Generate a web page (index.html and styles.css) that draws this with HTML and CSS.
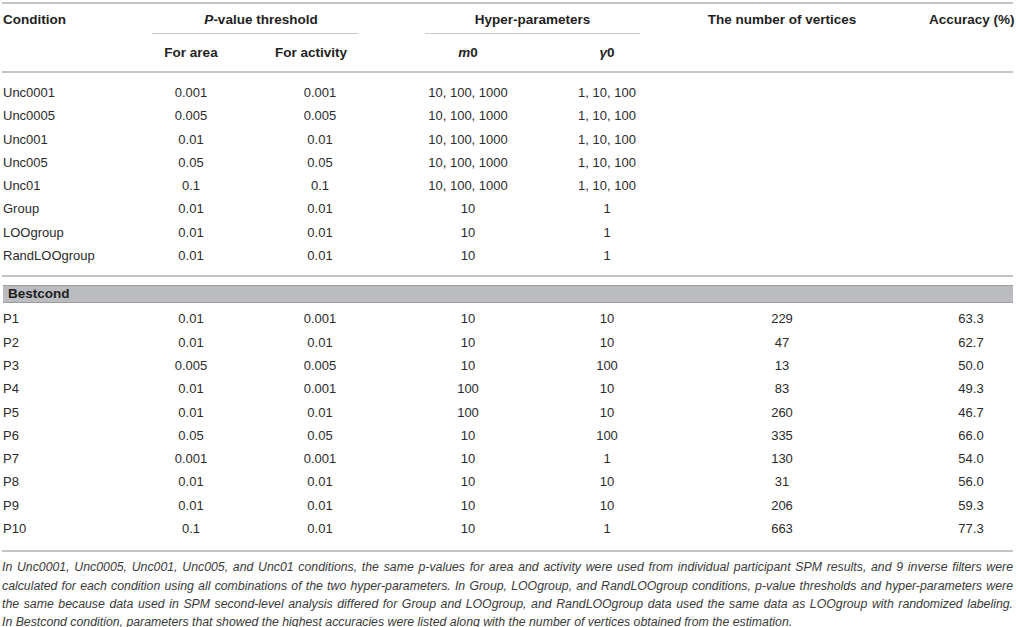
FILE: index.html
```html
<!DOCTYPE html>
<html lang="en">

<head>
    <meta charset="UTF-8">
    <meta name="viewport" content="width=device-width, initial-scale=1.0">
    <title>Table</title>
    <link rel="stylesheet" href="styles.css">
</head>

<body>
    <div class="wrap">
        <table class="tbl">
            <colgroup>
                <col class="c1">
                <col class="c2">
                <col class="c3">
                <col class="c4">
                <col class="c5">
                <col class="c6">
                <col class="c7">
            </colgroup>
            <thead>
                <tr class="h1">
                    <th rowspan="2" class="left top">Condition</th>
                    <th colspan="2"><div class="grp grp-p"><span><i>P</i>-value threshold</span></div></th>
                    <th colspan="2"><div class="grp grp-h">Hyper-parameters</div></th>
                    <th rowspan="2" class="top verts">The number of vertices</th>
                    <th rowspan="2" class="top">Accuracy (%)</th>
                </tr>
                <tr class="h2">
                    <th>For area</th>
                    <th class="act">For activity</th>
                    <th><i>m</i>0</th>
                    <th><i>γ</i>0</th>
                </tr>
            </thead>
            <tbody class="body">
                <tr><td>Unc0001</td><td>0.001</td><td>0.001</td><td>10, 100, 1000</td><td>1, 10, 100</td><td></td><td></td></tr>
                <tr><td>Unc0005</td><td>0.005</td><td>0.005</td><td>10, 100, 1000</td><td>1, 10, 100</td><td></td><td></td></tr>
                <tr><td>Unc001</td><td>0.01</td><td>0.01</td><td>10, 100, 1000</td><td>1, 10, 100</td><td></td><td></td></tr>
                <tr><td>Unc005</td><td>0.05</td><td>0.05</td><td>10, 100, 1000</td><td>1, 10, 100</td><td></td><td></td></tr>
                <tr><td>Unc01</td><td>0.1</td><td>0.1</td><td>10, 100, 1000</td><td>1, 10, 100</td><td></td><td></td></tr>
                <tr><td>Group</td><td>0.01</td><td>0.01</td><td>10</td><td>1</td><td></td><td></td></tr>
                <tr><td>LOOgroup</td><td>0.01</td><td>0.01</td><td>10</td><td>1</td><td></td><td></td></tr>
                <tr><td>RandLOOgroup</td><td>0.01</td><td>0.01</td><td>10</td><td>1</td><td></td><td></td></tr>
            </tbody>
            <tbody class="body best">
                <tr class="band-row"><td colspan="7"><div class="band">Bestcond</div></td></tr>
                <tr><td>P1</td><td>0.01</td><td>0.001</td><td>10</td><td>10</td><td>229</td><td>63.3</td></tr>
                <tr><td>P2</td><td>0.01</td><td>0.01</td><td>10</td><td>10</td><td>47</td><td>62.7</td></tr>
                <tr><td>P3</td><td>0.005</td><td>0.005</td><td>10</td><td>100</td><td>13</td><td>50.0</td></tr>
                <tr><td>P4</td><td>0.01</td><td>0.001</td><td>100</td><td>10</td><td>83</td><td>49.3</td></tr>
                <tr><td>P5</td><td>0.01</td><td>0.01</td><td>100</td><td>10</td><td>260</td><td>46.7</td></tr>
                <tr><td>P6</td><td>0.05</td><td>0.05</td><td>10</td><td>100</td><td>335</td><td>66.0</td></tr>
                <tr><td>P7</td><td>0.001</td><td>0.001</td><td>10</td><td>1</td><td>130</td><td>54.0</td></tr>
                <tr><td>P8</td><td>0.01</td><td>0.01</td><td>10</td><td>10</td><td>31</td><td>56.0</td></tr>
                <tr><td>P9</td><td>0.01</td><td>0.01</td><td>10</td><td>10</td><td>206</td><td>59.3</td></tr>
                <tr><td>P10</td><td>0.1</td><td>0.01</td><td>10</td><td>1</td><td>663</td><td>77.3</td></tr>
            </tbody>
        </table>

        <div class="note">
            <span class="full">In Unc0001, Unc0005, Unc001, Unc005, and Unc01 conditions, the same p-values for area and activity were used from individual participant SPM results, and 9 inverse filters were</span>
            <span class="full">calculated for each condition using all combinations of the two hyper-parameters. In Group, LOOgroup, and RandLOOgroup conditions, p-value thresholds and hyper-parameters were</span>
            <span class="full">the same because data used in SPM second-level analysis differed for Group and LOOgroup, and RandLOOgroup data used the same data as LOOgroup with randomized labeling.</span>
            <span>In Bestcond condition, parameters that showed the highest accuracies were listed along with the number of vertices obtained from the estimation.</span>
        </div>
    </div>
</body>

</html>
```

FILE: styles.css
```css
* {
    box-sizing: border-box;
}
body {
    margin: 0;
    background: #fff;
    color: #2b2b2b;
    font-family: "Liberation Sans", Arial, sans-serif;
}
.wrap {
    padding: 2px 3px 0 2px;
}
.tbl {
    width: 100%;
    border-collapse: collapse;
    table-layout: fixed;
    font-size: 13px;
    border-top: 2px solid #c4c4c4;
}
.c1 { width: 129px; }
.c2 { width: 120px; }
.c3 { width: 138px; }
.c4 { width: 158px; }
.c5 { width: 120px; }
.c6 { width: 262px; }
.c7 { width: 84px; }

th,
td {
    padding: 0;
    text-align: center;
    white-space: nowrap;
}
th {
    font-weight: bold;
    font-size: 13.5px;
    line-height: 16px;
    color: #1f1f1f;
}
th.left,
td:first-child {
    text-align: left;
    padding-left: 1px;
}
th.top {
    vertical-align: top;
    padding-top: 8px;
}
th.verts,
td:nth-child(6) {
    padding-right: 32px;
}
th.act {
    padding-right: 18px;
}
.h1 > th {
    padding-top: 8px;
}
.grp {
    padding-bottom: 5px;
    border-bottom: 1px solid #cbcbcb;
}
.grp-p {
    margin: 0 31px 0 21px;
}
.grp-p span {
    padding-left: 12px;
}
.grp-h {
    margin: 0 27px 0 36px;
}
.h2 > th {
    padding-top: 11px;
    padding-bottom: 10px;
}
thead {
    border-bottom: 2px solid #c4c4c4;
}

.body td {
    height: 23.3px;
    line-height: 23.3px;
}
.body tr:first-child td {
    padding-top: 8px;
}
.body tr:last-child td {
    padding-bottom: 8px;
}
tbody.body {
    border-bottom: 2px solid #c4c4c4;
}
.best tr:nth-child(2) td {
    padding-top: 4px;
}
.best tr:last-child td {
    padding-bottom: 10px;
}
.best .band-row td {
    padding-top: 8px;
    height: auto;
    line-height: normal;
}
.band {
    background: #bbbcbf;
    border-top: 1px solid #9c9c9c;
    border-bottom: 1px solid #9c9c9c;
    text-align: left;
    font-weight: bold;
    font-size: 13.5px;
    line-height: 16px;
    padding-left: 5px;
    color: #1f1f1f;
}

.note {
    margin-top: 6px;
    font-style: italic;
    font-size: 12.3px;
    line-height: 18.2px;
    color: #3a3a3a;
}
.note span {
    display: block;
    white-space: nowrap;
}
.note .full {
    text-align: justify;
    text-align-last: justify;
}
```
